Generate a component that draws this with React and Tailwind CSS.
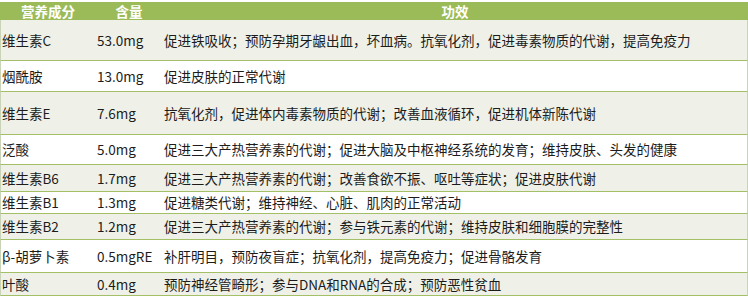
import React from 'react'

const rows = [
  { name: '维生素C', amount: '53.0mg', effect: '促进铁吸收；预防孕期牙龈出血，坏血病。抗氧化剂，促进毒素物质的代谢，提高免疫力', h: 'h-[41px]' },
  { name: '烟酰胺', amount: '13.0mg', effect: '促进皮肤的正常代谢', h: 'h-[31px]' },
  { name: '维生素E', amount: '7.6mg', effect: '抗氧化剂，促进体内毒素物质的代谢；改善血液循环，促进机体新陈代谢', h: 'h-[43px]' },
  { name: '泛酸', amount: '5.0mg', effect: '促进三大产热营养素的代谢；促进大脑及中枢神经系统的发育；维持皮肤、头发的健康', h: 'h-[30px]' },
  { name: '维生素B6', amount: '1.7mg', effect: '促进三大产热营养素的代谢；改善食欲不振、呕吐等症状；促进皮肤代谢', h: 'h-[27px]' },
  { name: '维生素B1', amount: '1.3mg', effect: '促进糖类代谢；维持神经、心脏、肌肉的正常活动', h: 'h-[22px]' },
  { name: '维生素B2', amount: '1.2mg', effect: '促进三大产热营养素的代谢；参与铁元素的代谢；维持皮肤和细胞膜的完整性', h: 'h-[26px]' },
  { name: 'β-胡萝卜素', amount: '0.5mgRE', effect: '补肝明目，预防夜盲症；抗氧化剂，提高免疫力；促进骨骼发育', h: 'h-[33px]' },
  { name: '叶酸', amount: '0.4mg', effect: '预防神经管畸形；参与DNA和RNA的合成；预防恶性贫血', h: 'h-[23px]' },
]

export default function App() {
  return (
    <div className="w-[748px] h-[296px] overflow-hidden bg-white pt-[2px] text-[13.5px] text-[#1c1c1c] font-['Microsoft_YaHei','Noto_Sans_CJK_SC',sans-serif]">
      {/* header */}
      <div className="grid grid-cols-[96px_66px_1fr] h-[18px] bg-[#9bbb59] text-white font-bold leading-[18px]">
        <div className="text-center">营养成分</div>
        <div className="text-center">含量</div>
        <div className="text-center">功效</div>
      </div>

      {rows.map((r, i) => (
        <div
          key={i}
          className={`grid grid-cols-[96px_66px_1fr] items-center border-b border-[#a3c066] border-l border-l-[#c9d3b8] border-r border-r-[#c9d3b8] ${r.h} ${i % 2 === 0 ? 'bg-[#eff1e8]' : 'bg-white'}`}
        >
          <div className="pl-[1px] whitespace-nowrap">{r.name}</div>
          <div className="whitespace-nowrap">{r.amount}</div>
          <div className="pl-[1px] whitespace-nowrap">{r.effect}</div>
        </div>
      ))}
    </div>
  )
}
